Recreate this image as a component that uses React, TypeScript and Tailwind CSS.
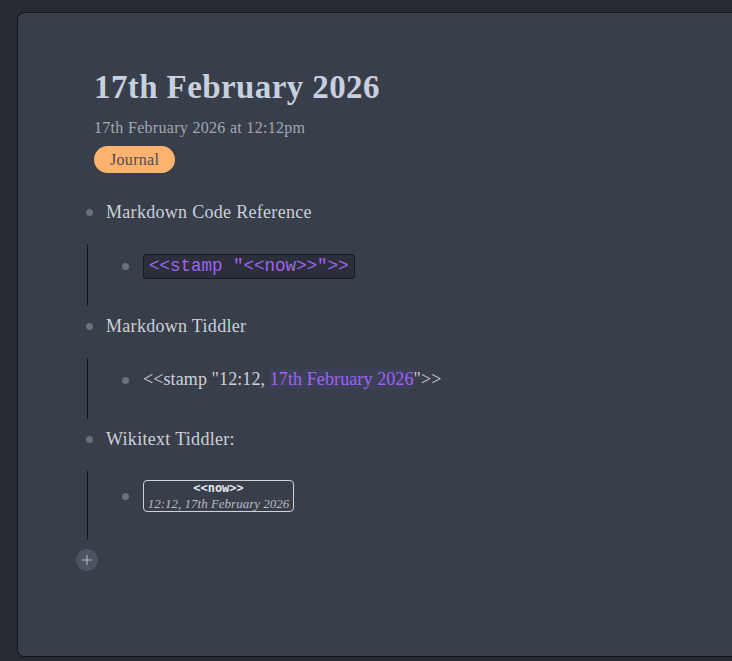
import { Plus } from "lucide-react"

const serif = "font-['Liberation_Serif','DejaVu_Serif',serif]"

function Bullet({ className = "" }: { className?: string }) {
  return <span className={`block w-[7px] h-[7px] rounded-full bg-[#6a707c] shrink-0 ${className}`} />
}

function Item({
  label,
  children,
  tall,
}: {
  label: string
  children: React.ReactNode
  tall?: boolean
}) {
  return (
    <li className="mb-[6px]">
      <div className="flex items-center h-7">
        <Bullet className="ml-[-9px]" />
        <span className="ml-[13px] text-[18px] tracking-[0.3px] text-[#ccd1da]">{label}</span>
      </div>
      <div
        className={`mt-[18px] ml-[-8px] border-l border-[#121418] pl-[35px] ${
          tall ? "pt-[9px] pb-[28px]" : "pt-[10px] pb-[27px]"
        }`}
      >
        <div className="flex items-center">
          <Bullet className="ml-[-1px]" />
          <div className="ml-[14px]">{children}</div>
        </div>
      </div>
    </li>
  )
}

export default function App() {
  return (
    <div className={`min-h-[661px] bg-[#262a33] pt-[12px] pl-[17px] ${serif}`}>
      <div className="h-[645px] bg-[#383e4a] border-t border-l border-b border-[#14161a] rounded-l-[7px] pt-[54px] pl-[76px]">
        <h1 className="text-[33px] leading-[40px] tracking-[0.4px] font-bold text-[#c8d0df]">17th February 2026</h1>
        <p className="mt-[11px] text-[16px] leading-[20px] tracking-[0.3px] text-[#a3a8b2]">17th February 2026 at 12:12pm</p>
        <span className="inline-flex items-center mt-[8px] h-[27px] px-[16px] rounded-full bg-[#fdb36d] text-[16px] tracking-[0.3px] text-[#4a4d55]">
          Journal
        </span>

        <ul className="mt-[25px] ml-[1px]">
          <Item label="Markdown Code Reference">
            <code className="block h-[25px] leading-[23px] px-[5px] rounded-[3px] bg-[#2b2f39] border border-[#17191e] text-[17.5px] text-[#a163f5] font-['Liberation_Mono',monospace]">
              {'<<stamp "<<now>>">>'}
            </code>
          </Item>
          <Item label="Markdown Tiddler">
            <span className="text-[18px] leading-[22px] tracking-[0.1px] text-[#ccd1da]">
              {'<<stamp "12:12, '}
              <span className="bg-[#3b4056] text-[#a163f5]">17th February 2026</span>
              {'">>'}
            </span>
          </Item>
          <Item label="Wikitext Tiddler:" tall>
            <div className="w-[151px] border border-[#cdd1d8] rounded-[4px] flex flex-col items-center">
              <span className="text-[12px] leading-[15px] font-bold text-[#e2e5ea] font-['DejaVu_Sans_Mono',monospace]">
                {"<<now>>"}
              </span>
              <span className="text-[13px] leading-[15px] italic text-[#b8bcc4]">12:12, 17th February 2026</span>
            </div>
          </Item>
        </ul>

        <button className="ml-[-18px] mt-[9px] w-[22px] h-[22px] rounded-full bg-[#4d5361] flex items-center justify-center text-[#b9bec8]">
          <Plus size={16} strokeWidth={1.5} />
        </button>
      </div>
    </div>
  )
}
